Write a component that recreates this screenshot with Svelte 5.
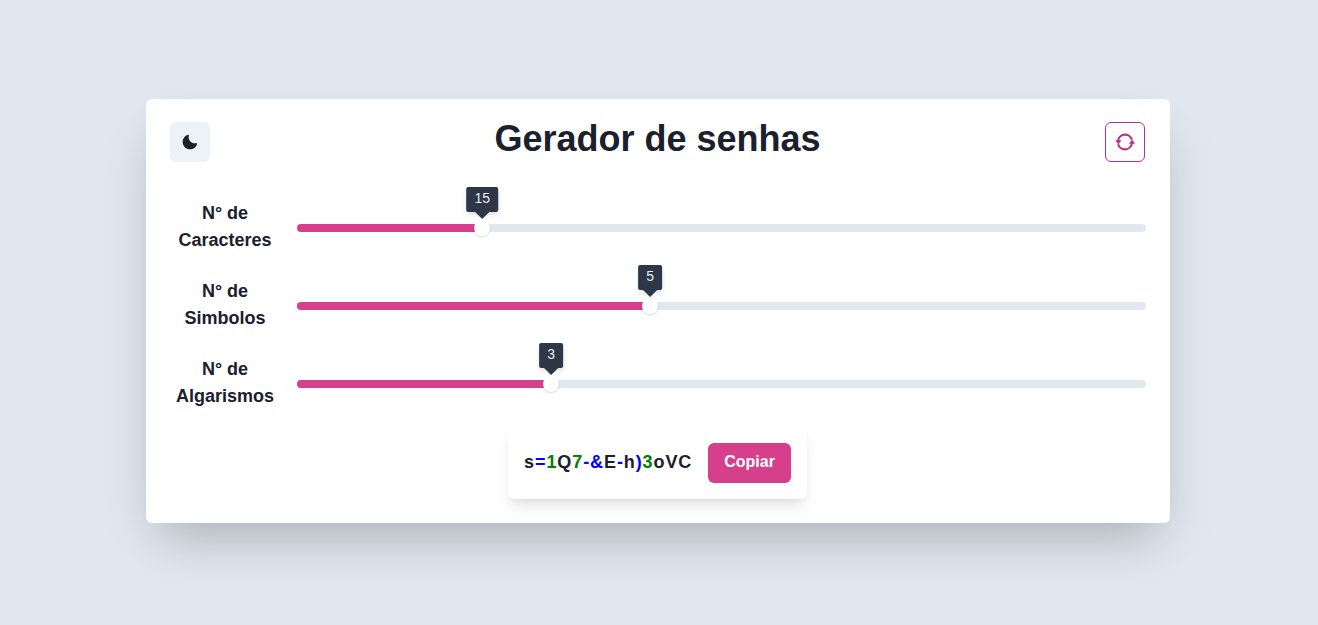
<script>
  const SYMBOLS = '!@#$%&*()-_=+';
  const DIGITS = '0123456789';
  const LETTERS = 'abcdefghijklmnopqrstuvwxyzABCDEFGHIJKLMNOPQRSTUVWXYZ';

  let length = $state(15);
  let symbols = $state(5);
  let digits = $state(3);
  let dark = $state(false);
  let password = $state('s=1Q7-&E-h)3oVC');

  const percent = (value, min, max) => (max > min ? ((value - min) / (max - min)) * 100 : 0);

  const sliders = $derived([
    { id: 'length', name: 'Caracteres', value: length, min: symbols + digits, max: 40 },
    { id: 'symbols', name: 'Simbolos', value: symbols, min: 0, max: length - digits },
    { id: 'digits', name: 'Algarismos', value: digits, min: 0, max: length - symbols }
  ]);

  function pick(pool) {
    return pool[Math.floor(Math.random() * pool.length)];
  }

  function generate() {
    const chars = Array.from({ length }, (_, i) =>
      pick(i < symbols ? SYMBOLS : i < symbols + digits ? DIGITS : LETTERS)
    );
    for (let i = chars.length - 1; i > 0; i--) {
      const j = Math.floor(Math.random() * (i + 1));
      [chars[i], chars[j]] = [chars[j], chars[i]];
    }
    password = chars.join('');
  }

  function update(id, value) {
    if (id === 'length') length = value;
    if (id === 'symbols') symbols = value;
    if (id === 'digits') digits = value;
    generate();
  }

  function kind(char) {
    if (DIGITS.includes(char)) return 'digit';
    return SYMBOLS.includes(char) ? 'symbol' : 'letter';
  }

  function copy() {
    navigator.clipboard?.writeText(password);
  }
</script>

<main class="page" class:dark>
  <section class="card">
    <header class="header">
      <button class="icon-button theme" type="button" aria-label="Alternar tema" onclick={() => (dark = !dark)}>
        <svg viewBox="0 0 24 24" width="16" height="16" aria-hidden="true">
          <path fill="currentColor" d="M21.4,13.7C20.6,13.9,19.8,14,19,14c-5,0-9-4-9-9c0-0.8,0.1-1.6,0.3-2.4c0.1-0.3,0-0.7-0.3-1c-0.3-0.3-0.6-0.4-1-0.3C4.3,2.7,1,7.1,1,12c0,6.1,4.9,11,11,11c4.9,0,9.3-3.3,10.6-8.1c0.1-0.3,0-0.7-0.3-1C22.1,13.7,21.7,13.6,21.4,13.7z" />
        </svg>
      </button>
      <h1>Gerador de senhas</h1>
      <button class="icon-button refresh" type="button" aria-label="Gerar nova senha" onclick={generate}>
        <svg viewBox="0 0 20 20" width="20" height="20" aria-hidden="true">
          <g fill="none" stroke="currentColor" stroke-width="2.2">
            <path d="M3 9A7.1 7.1 0 0 1 16.9 7.8" />
            <path d="M17 11A7.1 7.1 0 0 1 3.1 12.2" />
          </g>
          <path fill="currentColor" stroke="currentColor" stroke-width=".6" stroke-linejoin="round" d="M.8 8.6h5.2L3.3 11.9zM14.4 11.4h5.2L17.1 8.1z" />
        </svg>
      </button>
    </header>

    <div class="controls">
      {#each sliders as s (s.id)}
        <div class="row">
          <label for={s.id}>N° de {s.name}</label>
          <div class="slider" style="--value: {percent(s.value, s.min, s.max)}%">
            <div class="track"><div class="fill"></div></div>
            <input
              id={s.id}
              type="range"
              min={s.min}
              max={s.max}
              value={s.value}
              oninput={(e) => update(s.id, Number(e.currentTarget.value))}
            />
            <output class="tip" for={s.id}>{s.value}</output>
          </div>
        </div>
      {/each}
    </div>

    <div class="result">
      <p class="password">{#each password as char}<span class={kind(char)}>{char}</span>{/each}</p>
      <button class="copy" type="button" onclick={copy}>Copiar</button>
    </div>
  </section>
</main>

<style>
  :global(body) {
    margin: 0;
  }

  .page {
    --bg: #e2e8f0;
    --surface: #ffffff;
    --text: #1a202c;
    --muted: #edf2f7;
    --rail: #e2e8f0;
    --accent: #d53f8c;
    --accent-dark: #b83280;
    box-sizing: border-box;
    min-height: 100vh;
    display: flex;
    align-items: center;
    justify-content: center;
    padding: 0 3px 4px 0;
    background: var(--bg);
    color: var(--text);
    font-family: "Liberation Sans", Helvetica, Arial, sans-serif;
    font-size: 16px;
    line-height: 1.5;
  }

  .page.dark {
    --bg: #171923;
    --surface: #2d3748;
    --text: #f7fafc;
    --muted: #4a5568;
    --rail: #4a5568;
  }

  .card {
    box-sizing: border-box;
    width: 100%;
    max-width: 1024px;
    display: flex;
    flex-direction: column;
    padding: 23px 24px 24px;
    border-radius: 6px;
    background: var(--surface);
    box-shadow: 0 25px 50px -12px rgba(0, 0, 0, 0.25);
  }

  .header {
    display: flex;
    align-items: flex-start;
    justify-content: space-between;
    min-height: 54px;
    margin-bottom: 24px;
  }

  h1 {
    margin: 0;
    font-size: 36px;
    font-weight: 700;
    line-height: 34px;
  }

  button {
    font: inherit;
    cursor: pointer;
  }

  .icon-button {
    box-sizing: border-box;
    width: 40px;
    height: 40px;
    display: flex;
    align-items: center;
    justify-content: center;
    padding: 0;
    border: 0;
    border-radius: 6px;
    background: var(--muted);
    color: var(--text);
  }

  .icon-button.refresh {
    border: 1px solid var(--accent-dark);
    background: transparent;
    color: var(--accent-dark);
  }

  .controls {
    display: grid;
    gap: 22px;
    margin-bottom: 15px;
  }

  .row {
    display: grid;
    grid-template-columns: 111px 1fr;
    align-items: center;
    gap: 16px;
  }

  label {
    padding: 0 4px 2px;
    font-size: 18px;
    font-weight: 700;
    line-height: 27px;
    text-align: center;
  }

  .slider {
    position: relative;
    height: 16px;
    display: flex;
    align-items: center;
  }

  .track {
    width: 100%;
    height: 8px;
    overflow: hidden;
    border-radius: 4px;
    background: var(--rail);
  }

  .fill {
    width: var(--value);
    height: 100%;
    background: var(--accent);
  }

  input {
    position: absolute;
    inset: 0 -8px;
    width: calc(100% + 16px);
    height: 16px;
    margin: 0;
    appearance: none;
    background: transparent;
    cursor: pointer;
  }

  input::-webkit-slider-thumb {
    appearance: none;
    width: 16px;
    height: 16px;
    border: 0;
    border-radius: 50%;
    background: #ffffff;
    box-shadow: 0 1px 3px rgba(0, 0, 0, 0.1), 0 1px 2px rgba(0, 0, 0, 0.06);
  }

  .tip {
    position: absolute;
    left: var(--value);
    bottom: 24px;
    transform: translateX(-50%);
    padding: 0 8px 2px;
    border-radius: 2px;
    background: #2d3748;
    color: rgba(255, 255, 255, 0.92);
    font-size: 14px;
    line-height: 23px;
    box-shadow: 0 4px 6px -1px rgba(0, 0, 0, 0.1), 0 2px 4px -1px rgba(0, 0, 0, 0.06);
    pointer-events: none;
  }

  .tip::after {
    content: "";
    position: absolute;
    left: 50%;
    bottom: -5px;
    width: 10px;
    height: 10px;
    margin-left: -5px;
    background: inherit;
    transform: rotate(45deg);
  }

  .result {
    align-self: center;
    display: flex;
    align-items: center;
    gap: 16px;
    padding: 16px;
    border-radius: 6px;
    box-shadow: 0 10px 15px -3px rgba(0, 0, 0, 0.1), 0 4px 6px -2px rgba(0, 0, 0, 0.05);
  }

  .password {
    margin: 0;
    font-size: 18px;
    font-weight: 700;
    letter-spacing: 0.05em;
  }

  .symbol {
    color: blue;
  }

  .digit {
    color: green;
  }

  .copy {
    height: 40px;
    padding: 0 16px 2px;
    border: 0;
    border-radius: 6px;
    background: var(--accent);
    color: #ffffff;
    font-weight: 700;
  }
</style>
